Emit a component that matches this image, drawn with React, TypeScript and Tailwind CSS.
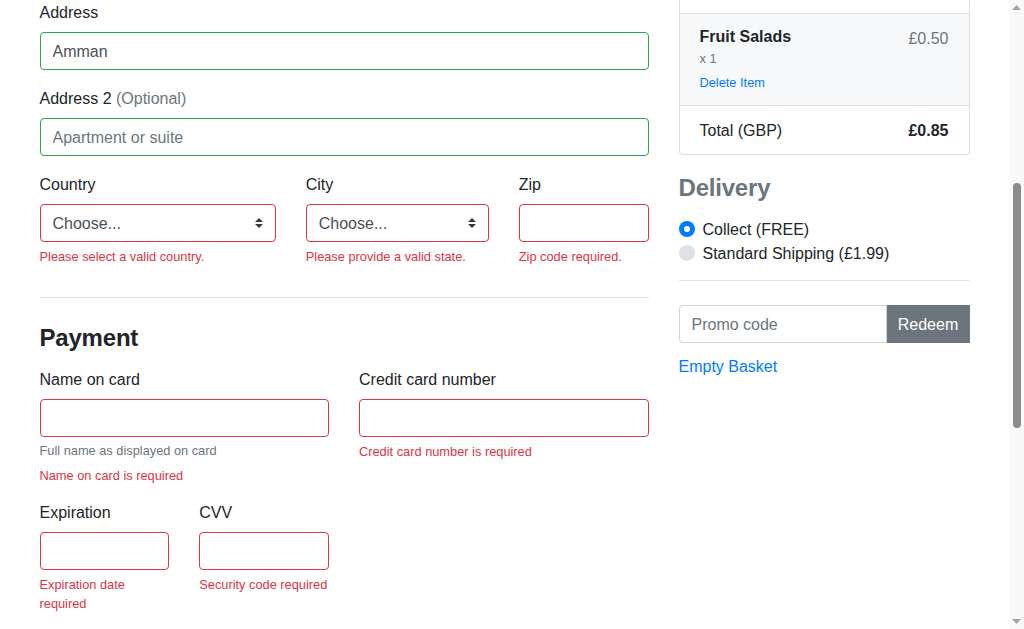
import React from "react";

const font = { fontFamily: '"Liberation Sans", Arial, sans-serif' };

function Label({ children }: { children: React.ReactNode }) {
  return <label className="block pt-px mb-[7px] leading-6 text-[16px] text-[#212529]">{children}</label>;
}

function TextBox({ valid, value, placeholder }: { valid?: boolean; value?: string; placeholder?: string }) {
  return (
    <input
      readOnly
      value={value ?? ""}
      placeholder={placeholder}
      className={`block w-full h-[38px] px-3 pt-px rounded-[4px] border bg-white text-[16px] text-[#495057] placeholder:text-[#6c757d] outline-none ${
        valid ? "border-[#28a745]" : "border-[#dc3545]"
      }`}
    />
  );
}

function Select() {
  return (
    <div className="relative h-[38px] w-full rounded-[4px] border border-[#dc3545] bg-white flex items-center pl-3 pt-px text-[16px] text-[#495057]">
      <span>Choose...</span>
      <svg className="absolute right-3 top-1/2 -translate-y-1/2" width="8" height="10" viewBox="0 0 4 5">
        <path fill="#343a40" d="M2 0L0 2h4zm0 5L0 3h4z" />
      </svg>
    </div>
  );
}

function Feedback({ children }: { children: React.ReactNode }) {
  return <div className="mt-1 pt-px -mb-px text-[12.8px] leading-[19.2px] text-[#dc3545]">{children}</div>;
}

export default function App() {
  return (
    <div className="h-[629px] w-full overflow-hidden flex bg-white text-[#212529]" style={font}>
      <div className="flex-1 min-w-0">
        <div className="w-[960px] mx-auto px-[15px] flex gap-[30px]">
          {/* Left column */}
          <div className="w-[609px] shrink-0">
            <div className="mb-4">
              <Label>Address</Label>
              <TextBox valid value="Amman" />
            </div>
            <div className="mb-4">
              <Label>
                Address 2 <span className="text-[#6c757d]">(Optional)</span>
              </Label>
              <TextBox valid placeholder="Apartment or suite" />
            </div>
            <div className="grid grid-cols-12 gap-x-[30px]">
              <div className="col-span-5 mb-4">
                <Label>Country</Label>
                <Select />
                <Feedback>Please select a valid country.</Feedback>
              </div>
              <div className="col-span-4 mb-4">
                <Label>City</Label>
                <Select />
                <Feedback>Please provide a valid state.</Feedback>
              </div>
              <div className="col-span-3 mb-4">
                <Label>Zip</Label>
                <TextBox />
                <Feedback>Zip code required.</Feedback>
              </div>
            </div>
            <hr className="mt-4 mb-6 border-0 border-t border-[#e5e5e5]" />
            <h4 className="pt-[2px] text-[24px] leading-[28.8px] font-semibold mb-[14px] tracking-[-0.2px]">Payment</h4>
            <div className="grid grid-cols-12 gap-x-[30px]">
              <div className="col-span-6 mb-4">
                <Label>Name on card</Label>
                <TextBox />
                <small className="block pt-[3px] leading-[21px] text-[12.8px] text-[#6c757d]">Full name as displayed on card</small>
                <Feedback>Name on card is required</Feedback>
              </div>
              <div className="col-span-6 mb-4">
                <Label>Credit card number</Label>
                <TextBox />
                <Feedback>Credit card number is required</Feedback>
              </div>
              <div className="col-span-3 mb-4">
                <Label>Expiration</Label>
                <TextBox />
                <Feedback>Expiration date required</Feedback>
              </div>
              <div className="col-span-3 mb-4">
                <Label>CVV</Label>
                <TextBox />
                <Feedback>Security code required</Feedback>
              </div>
            </div>
          </div>

          {/* Right column */}
          <div className="w-[291px] shrink-0">
            <div className="border border-t-0 border-[#dfdfdf] rounded-b-[4px]">
              <div className="h-[13px]" />
              <div className="border-t border-[#dfdfdf] bg-[#f8f9fa] px-5 pt-3 pb-3 flex justify-between">
                <div>
                  <h6 className="pt-px text-[16px] leading-[19.2px] font-semibold">Fruit Salads</h6>
                  <small className="block pt-[2px] leading-[21px] text-[12.8px] text-[#6c757d]">x 1</small>
                  <small className="block pt-[3px] leading-[21px] text-[12.8px] text-[#007bff]">Delete Item</small>
                </div>
                <span className="pt-px leading-6 text-[#6c757d]">£0.50</span>
              </div>
              <div className="border-t border-[#dfdfdf] px-5 pt-[13px] pb-[11px] flex justify-between leading-6">
                <span>Total (GBP)</span>
                <strong className="font-bold">£0.85</strong>
              </div>
            </div>

            <h4 className="mt-[19px] mb-[14px] text-[24px] leading-[28.8px] font-semibold text-[#6c757d] tracking-[-0.2px]">
              Delivery
            </h4>
            <div className="flex items-center h-6">
              <span className="w-4 h-4 rounded-full bg-[#007bff] flex items-center justify-center">
                <span className="w-[6px] h-[6px] rounded-full bg-white" />
              </span>
              <span className="ml-[8px] pt-px leading-6">Collect (FREE)</span>
            </div>
            <div className="flex items-center h-6">
              <span className="w-4 h-4 rounded-full bg-[#dee2e6]" />
              <span className="ml-[8px] pt-px leading-6">Standard Shipping (£1.99)</span>
            </div>
            <hr className="mt-[15px] mb-6 border-0 border-t border-[#e5e5e5]" />
            <div className="flex h-[38px]">
              <input
                readOnly
                placeholder="Promo code"
                className="flex-1 min-w-0 h-full px-3 pt-px border border-[#ced4da] rounded-l-[4px] text-[16px] placeholder:text-[#6c757d] outline-none"
              />
              <button className="h-full w-[83px] pt-px bg-[#6c757d] text-white text-[16px]">Redeem</button>
            </div>
            <div className="mt-[12px] leading-6 text-[#007bff]">Empty Basket</div>
          </div>
        </div>
      </div>

      {/* Scrollbar */}
      <div className="w-[15px] shrink-0 bg-[#f9f9f9] flex flex-col items-center">
        <svg className="mt-[5px]" width="9" height="5" viewBox="0 0 9 5">
          <path d="M4.5 0L9 5H0z" fill="#a3a3a3" />
        </svg>
        <div className="mt-[173px] w-[8px] h-[245px] rounded-full bg-[#8b8b8b]" />
        <div className="flex-1" />
        <svg className="mb-[5px]" width="9" height="5" viewBox="0 0 9 5">
          <path d="M0 0H9L4.5 5z" fill="#a3a3a3" />
        </svg>
      </div>
    </div>
  );
}
